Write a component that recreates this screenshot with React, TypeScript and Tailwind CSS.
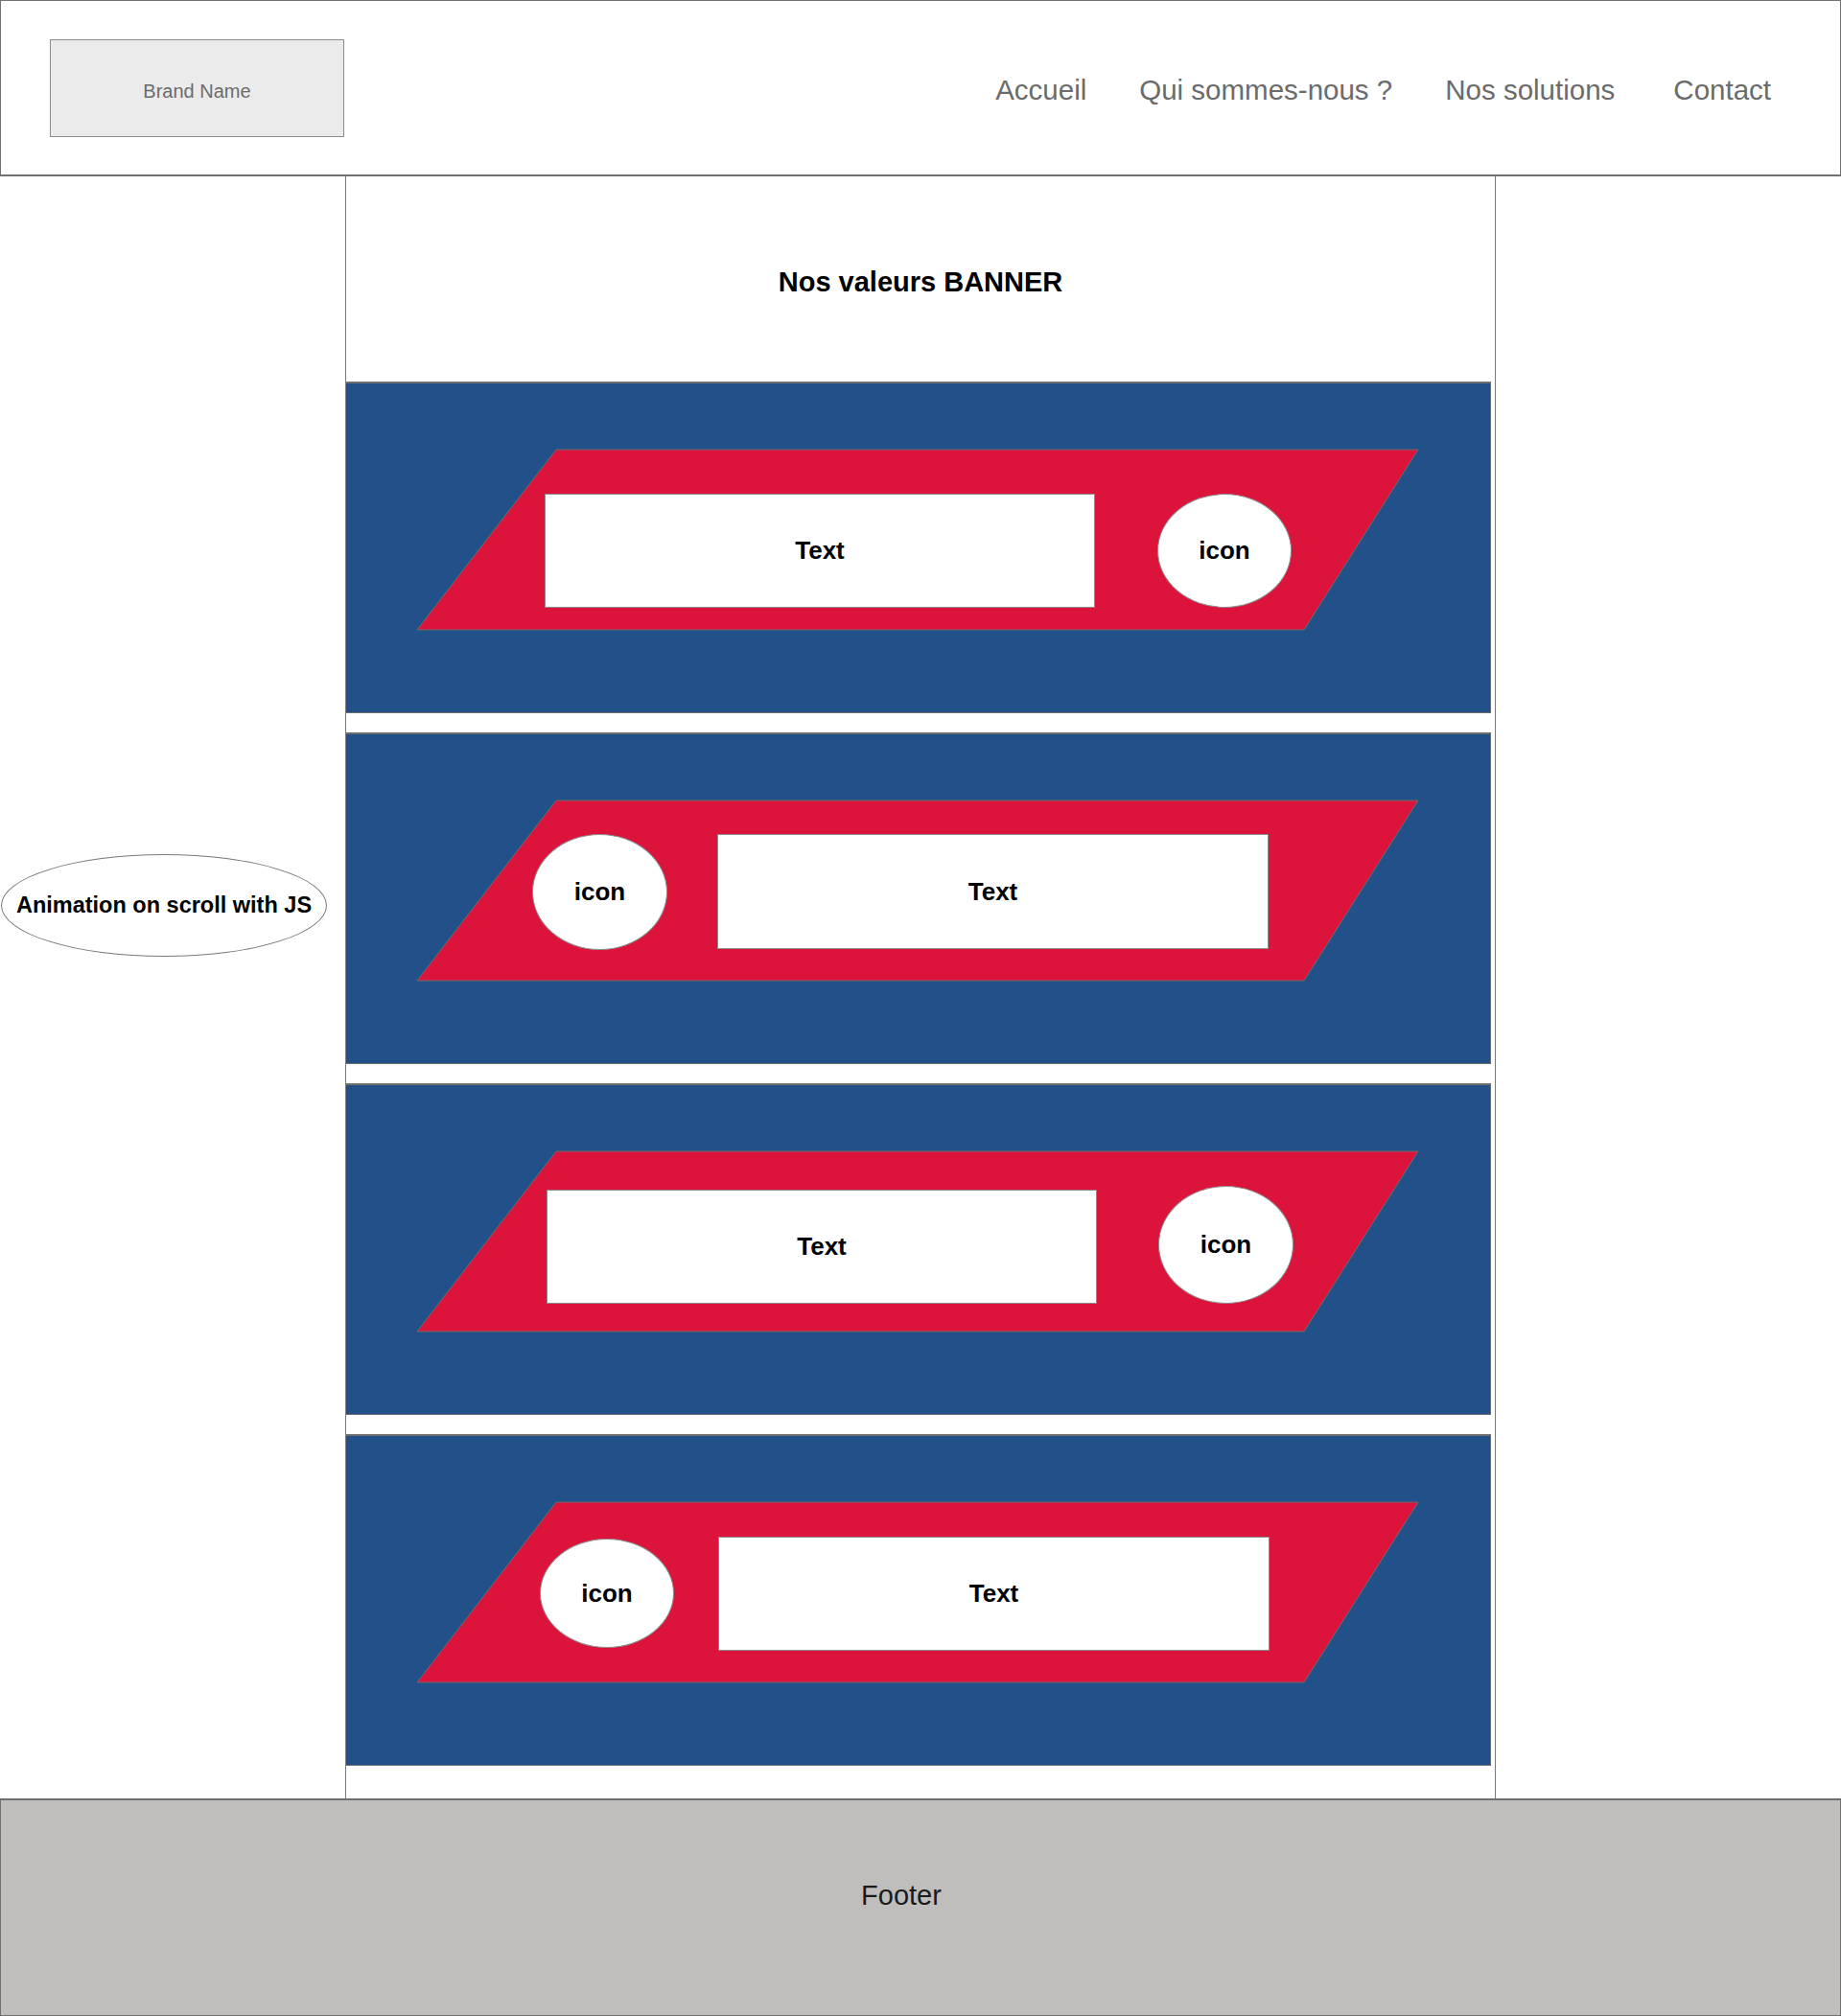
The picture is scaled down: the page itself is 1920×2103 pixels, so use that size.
const navLinks = ["Accueil", "Qui sommes-nous ?", "Nos solutions"];

type Row = {
  iconFirst: boolean;
  rowClass: string;
  textClass: string;
  iconClass: string;
};

const rows: Row[] = [
  {
    iconFirst: false,
    rowClass: "pt-[115px] pl-[207px] gap-[65px]",
    textClass: "w-[574px] h-[119px]",
    iconClass: "w-[140px] h-[119px]",
  },
  {
    iconFirst: true,
    rowClass: "pt-[104px] pl-[194px] gap-[52px]",
    textClass: "w-[575px] h-[120px]",
    iconClass: "w-[141px] h-[121px]",
  },
  {
    iconFirst: false,
    rowClass: "pt-[105px] pl-[209px] gap-[64px]",
    textClass: "w-[574px] h-[119px] mt-[4px]",
    iconClass: "w-[141px] h-[123px]",
  },
  {
    iconFirst: true,
    rowClass: "pt-[105px] pl-[202px] gap-[46px]",
    textClass: "w-[575px] h-[119px]",
    iconClass: "w-[140px] h-[114px] mt-[2px]",
  },
];

const TextBox = ({ className }: { className: string }) => (
  <div className={`${className} bg-white border border-[#8c8c8c] flex items-center justify-center text-[26px] font-bold text-black`}>
    Text
  </div>
);

const IconBubble = ({ className }: { className: string }) => (
  <div className={`${className} bg-white border border-[#8c8c8c] rounded-[50%] flex items-center justify-center text-[26px] font-bold text-black`}>
    icon
  </div>
);

const ValuePanel = ({ row }: { row: Row }) => {
  return (
    <div className="relative w-[1194px] h-[346px] bg-[#22518a] border-t-2 border-b border-r border-[#6e6e6e]">
      {/* red parallelogram behind the content */}
      <svg
        className="absolute left-0 top-0"
        width="1194"
        height="346"
        viewBox="0 0 1194 346"
      >
        <polygon
          points="219,69 1118,69 999,257 74,257"
          fill="#dc143c"
          stroke="#6b6b6b"
          strokeWidth="1"
        />
      </svg>
      <div className={`relative flex items-start ${row.rowClass}`}>
        {row.iconFirst ? (
          <>
            <IconBubble className={row.iconClass} />
            <TextBox className={row.textClass} />
          </>
        ) : (
          <>
            <TextBox className={row.textClass} />
            <IconBubble className={row.iconClass} />
          </>
        )}
      </div>
    </div>
  );
};

const App = () => {
  return (
    <div className="w-[1920px] h-[2103px] bg-white font-['Liberation_Sans',Arial,sans-serif] flex flex-col">
      <header className="h-[184px] shrink-0 border border-b-2 border-[#707070] flex items-center pl-[51px] pr-[72px]">
        <div className="w-[307px] h-[102px] pt-[6px] bg-[#ebebeb] border border-[#8f8f8f] flex items-center justify-center text-[20px] text-[#6b6b6b]">
          Brand Name
        </div>
        <nav className="ml-auto mt-[5px] flex items-center gap-[55px] text-[29.5px] text-[#6b6b6b]">
          {navLinks.map((link) => (
            <span key={link}>{link}</span>
          ))}
          <span className="ml-[6px]">Contact</span>
        </nav>
      </header>

      <div className="flex flex-1">
        <aside className="w-[360px] shrink-0">
          <div className="mt-[707px] ml-[1px] w-[340px] h-[107px] rounded-[50%] border border-[#7a7a7a] flex items-center justify-center text-[23.5px] font-bold text-black">
            Animation on scroll with JS
          </div>
        </aside>

        <main className="w-[1200px] shrink-0 border-x border-[#7a7a7a] pb-[34px] flex flex-col">
          <div className="h-[214px] pt-[8px] flex items-center justify-center text-[29px] font-bold text-black">
            Nos valeurs BANNER
          </div>
          <div className="flex flex-col gap-[20px]">
            {rows.map((row, i) => (
              <ValuePanel key={i} row={row} />
            ))}
          </div>
        </main>
      </div>

      <footer className="h-[227px] shrink-0 bg-[#bfbebd] border border-t-2 border-[#6e6e6e] flex items-center justify-center pr-[40px] pb-[24px] text-[29px] text-[#1a1a1a]">
        Footer
      </footer>
    </div>
  );
};

export default App;
